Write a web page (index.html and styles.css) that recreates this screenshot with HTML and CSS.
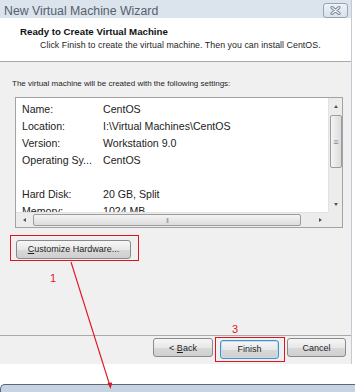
FILE: index.html
```html
<!DOCTYPE html>
<html lang="en">
<head>
    <meta charset="UTF-8">
    <meta name="viewport" content="width=device-width, initial-scale=1.0">
    <title>New Virtual Machine Wizard</title>
    <link rel="stylesheet" href="styles.css">
</head>
<body>
    <div class="window">
        <div class="titlebar">
            <span class="title">New Virtual Machine Wizard</span>
            <div class="close-btn">
                <svg width="11" height="9" viewBox="0 0 11 9">
                    <path d="M2 1.5 L9 7.5 M9 1.5 L2 7.5" stroke="#7d8894" stroke-width="3.2" stroke-linecap="round"/>
                    <path d="M2 1.5 L9 7.5 M9 1.5 L2 7.5" stroke="#edf1f5" stroke-width="1.2" stroke-linecap="round"/>
                </svg>
            </div>
        </div>

        <div class="header">
            <div class="header-title">Ready to Create Virtual Machine</div>
            <div class="header-sub">Click Finish to create the virtual machine. Then you can install CentOS.</div>
        </div>

        <div class="content">
            <p class="intro">The virtual machine will be created with the following settings:</p>

            <div class="listbox">
                <div class="list-rows">
                    <div class="row"><span class="label">Name:</span><span>CentOS</span></div>
                    <div class="row"><span class="label">Location:</span><span>I:\Virtual Machines\CentOS</span></div>
                    <div class="row"><span class="label">Version:</span><span>Workstation 9.0</span></div>
                    <div class="row"><span class="label">Operating Sy...</span><span>CentOS</span></div>
                    <div class="row"></div>
                    <div class="row"><span class="label">Hard Disk:</span><span>20 GB, Split</span></div>
                    <div class="row"><span class="label">Memory:</span><span>1024 MB</span></div>
                </div>
                <div class="vscroll">
                    <div class="sb-arrow"><span class="tri tri-up"></span></div>
                    <div class="sb-thumb v-thumb"><span class="grip">&#8801;</span></div>
                    <div class="sb-track"></div>
                    <div class="sb-arrow"><span class="tri tri-down"></span></div>
                </div>
                <div class="hscroll">
                    <div class="sb-arrow"><span class="tri tri-left"></span></div>
                    <div class="sb-thumb h-thumb"><span class="grip">|||</span></div>
                    <div class="sb-track"></div>
                    <div class="sb-arrow"><span class="tri tri-right"></span></div>
                </div>
                <div class="sb-corner"></div>
            </div>

            <div class="mark-box mark-customize">
                <button class="btn btn-customize"><u>C</u>ustomize Hardware...</button>
            </div>
            <div class="mark-num num-1">1</div>
        </div>

        <div class="footer">
            <button class="btn">&lt; <u>B</u>ack</button>
            <div class="mark-box mark-finish">
                <span class="mark-num num-3">3</span>
                <button class="btn btn-default">Finish</button>
            </div>
            <button class="btn">Cancel</button>
        </div>
    </div>

    <div class="next-window">
        <span class="next-title">Hardware</span>
    </div>

    <!-- annotation arrow from step 1 down to the hardware window -->
    <svg class="arrow" width="355" height="392" viewBox="0 0 355 392">
        <line x1="71" y1="262" x2="110" y2="386" stroke="#e0141e" stroke-width="1.1"/>
        <path d="M107.5 383 L110.6 389 L112.2 382.4 Z" fill="#e0141e"/>
    </svg>
</body>
</html>
```

FILE: styles.css
```css
body {
    margin: 0;
    width: 355px;
    height: 392px;
    overflow: hidden;
    position: relative;
    background: #ffffff;
    font-family: "Liberation Sans", Arial, sans-serif;
    color: #1e1e1e;
}

.window {
    width: 351px;
    border-right: 1px solid #c3cad3;
}

/* title bar */
.titlebar {
    height: 18px;
    box-sizing: border-box;
    padding: 4px 3px 0 4px;
    display: flex;
    justify-content: space-between;
    align-items: flex-start;
    background: #dbe3ec;
}
.title {
    font-size: 12.3px;
    line-height: 14px;
    color: #56616e;
}
.close-btn {
    margin-top: -1px;
    width: 23px;
    height: 13px;
    border: 1px solid #98a4b2;
    border-radius: 3px;
    background: linear-gradient(#eef2f6, #d9e1ea);
    display: flex;
    align-items: center;
    justify-content: center;
}

/* white header */
.header {
    height: 44px;
    box-sizing: border-box;
    padding: 8px 0 0 20px;
    background: #ffffff;
    border-bottom: 1px solid #a9a9a9;
}
.header-title {
    font-size: 9.7px;
    font-weight: bold;
    line-height: 12px;
    color: #111;
}
.header-sub {
    margin-top: 1px;
    padding-left: 20px;
    font-size: 8.8px;
    letter-spacing: 0.05px;
    line-height: 12px;
}

/* main gray area */
.content {
    height: 273px;
    box-sizing: border-box;
    padding-top: 16px;
    background: #f0f0f0;
}
.intro {
    margin: 0 0 7px 12px;
    font-size: 8px;
    line-height: 12px;
}

.listbox {
    margin-left: 15px;
    width: 328px;
    height: 131px;
    box-sizing: border-box;
    border: 1px solid #a3a3a3;
    background: #ffffff;
    display: grid;
    grid-template-columns: 1fr 14px;
    grid-template-rows: 1fr 15px;
}
.list-rows {
    overflow: hidden;
    padding: 3px 0 0 6px;
    font-size: 10.6px;
    color: #222;
}
.row {
    height: 17px;
    line-height: 17px;
    display: flex;
    white-space: nowrap;
}
.label {
    width: 81px;
}

/* scrollbars */
.vscroll, .hscroll {
    display: flex;
    background: #ececec;
}
.vscroll {
    flex-direction: column;
    border-left: 1px solid #e2e2e2;
}
.hscroll {
    border-top: 1px solid #e2e2e2;
}
.sb-arrow {
    flex: 0 0 16px;
    display: flex;
    align-items: center;
    justify-content: center;
}
.sb-track {
    flex: 1;
}
.sb-thumb {
    box-sizing: border-box;
    border: 1px solid #9c9c9c;
    border-radius: 2px;
    display: flex;
    align-items: center;
    justify-content: center;
    color: #8a8a8a;
}
.v-thumb {
    flex: 0 0 53px;
    margin: 1px 0 0 1px;
    width: 12px;
    background: linear-gradient(90deg, #f4f4f4, #dcdcdc);
    font-size: 9px;
}
.h-thumb {
    flex: 0 0 268px;
    margin: 1px 0 0 1px;
    height: 12px;
    background: linear-gradient(#f4f4f4, #dcdcdc);
    font-size: 6px;
    letter-spacing: -1px;
}
.sb-corner {
    background: #ececec;
}
.tri {
    width: 0;
    height: 0;
    border: 2.5px solid transparent;
}
.tri-up { border-bottom: 3px solid #555; border-top-width: 0; }
.tri-down { border-top: 3px solid #555; border-bottom-width: 0; }
.tri-left { border-right: 3px solid #555; border-left-width: 0; }
.tri-right { border-left: 3px solid #555; border-right-width: 0; }

/* buttons */
.btn {
    height: 19px;
    box-sizing: border-box;
    padding: 0;
    border: 1px solid #8a8a8a;
    border-radius: 3px;
    background: linear-gradient(#f6f6f6 0%, #e8e8e8 50%, #d9d9d9 51%, #cfcfcf 100%);
    font-family: "Liberation Sans", Arial, sans-serif;
    font-size: 9px;
    color: #1e1e1e;
}
.footer .btn {
    width: 59px;
}
.footer > .btn {
    margin-top: 1px;
}
.footer > .btn:first-child {
    width: 60px;
}
.btn-default {
    border-color: #4f8fc0;
    box-shadow: inset 0 0 0 1px #b8e3f5;
}
.btn-customize {
    width: 115px;
}

/* red annotation marks */
.mark-box {
    box-sizing: border-box;
    border: 1px solid #e0141e;
}
.mark-customize {
    margin: 7px 0 0 10px;
    width: 129px;
    height: 26px;
    padding: 2px 7px 3px 5px;
}
.mark-finish {
    position: relative;
    width: 70px;
    height: 25px;
    padding: 0 5px 0 4px;
    margin: 0 2px;
}
.mark-num {
    color: #e0141e;
    font-size: 11px;
    line-height: 12px;
}
.num-1 {
    margin: 11px 0 0 50px;
}
.num-3 {
    position: absolute;
    top: -15px;
    left: 16px;
}

.footer {
    height: 29px;
    box-sizing: border-box;
    padding: 1px 5px 0 0;
    border-top: 1px solid #a9a9a9;
    background: #f0f0f0;
    display: flex;
    justify-content: flex-end;
    align-items: flex-start;
}

/* next window peeking in at the bottom */
.next-window {
    margin-top: 20px;
    height: 10px;
    box-sizing: border-box;
    padding: 2px 0 0 3px;
    border-top: 1px solid #5d6874;
    border-left: 1px solid #5d6874;
    border-radius: 5px 0 0 0;
    background: #c7d3e2;
}
.next-title {
    font-size: 12px;
    line-height: 14px;
    color: #1d2733;
}

.arrow {
    position: absolute;
    top: 0;
    left: 0;
    pointer-events: none;
}
```
